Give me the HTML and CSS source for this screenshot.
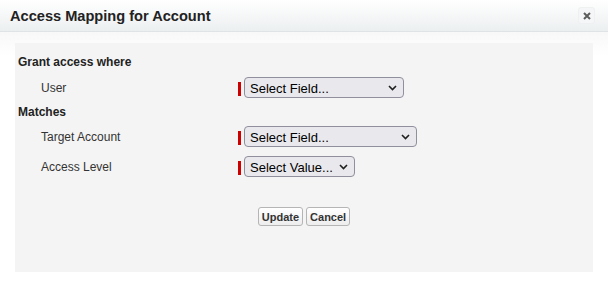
FILE: index.html
```html
<!DOCTYPE html>
<html lang="en">
<head>
    <meta charset="UTF-8">
    <meta name="viewport" content="width=device-width, initial-scale=1.0">
    <title>Access Mapping for Account</title>
    <link rel="stylesheet" href="styles.css">
</head>
<body>
    <div class="dialog">
        <!-- Header -->
        <div class="dialog-header">
            <h2 class="dialog-title">Access Mapping for Account</h2>
            <div class="close-btn">
                <svg width="8" height="8" viewBox="0 0 8 8">
                    <path d="M1 1 L7 7 M7 1 L1 7" stroke="#5c5c5c" stroke-width="2" fill="none"/>
                </svg>
            </div>
        </div>

        <!-- Body -->
        <div class="dialog-body">
            <div class="panel">
                <div class="section-title">Grant access where</div>
                <div class="form-row row-user">
                    <div class="form-label">User</div>
                    <div class="required-bar"></div>
                    <div class="select select-field">
                        <span>Select Field...</span>
                        <svg class="chevron" width="9" height="6" viewBox="0 0 9 6"><path d="M1 1 L4.5 4.5 L8 1" stroke="#1f1f1f" stroke-width="1.6" fill="none"/></svg>
                    </div>
                </div>

                <div class="section-title section-matches">Matches</div>
                <div class="form-row row-target">
                    <div class="form-label">Target Account</div>
                    <div class="required-bar"></div>
                    <div class="select select-target">
                        <span>Select Field...</span>
                        <svg class="chevron" width="9" height="6" viewBox="0 0 9 6"><path d="M1 1 L4.5 4.5 L8 1" stroke="#1f1f1f" stroke-width="1.6" fill="none"/></svg>
                    </div>
                </div>
                <div class="form-row row-level">
                    <div class="form-label">Access Level</div>
                    <div class="required-bar"></div>
                    <div class="select select-value">
                        <span>Select Value...</span>
                        <svg class="chevron" width="9" height="6" viewBox="0 0 9 6"><path d="M1 1 L4.5 4.5 L8 1" stroke="#1f1f1f" stroke-width="1.6" fill="none"/></svg>
                    </div>
                </div>

                <div class="buttons">
                    <button class="btn">Update</button>
                    <button class="btn">Cancel</button>
                </div>
            </div>
        </div>
    </div>
</body>
</html>
```

FILE: styles.css
```css
body {
    font-family: "Liberation Sans", Arial, sans-serif;
    background: #fff;
    margin: 0;
}
.dialog {
    width: 608px;
    height: 290px;
    background: #fff;
}

/* Header */
.dialog-header {
    height: 31px;
    display: flex;
    align-items: center;
    justify-content: space-between;
    padding: 0 13px 0 10px;
    background: linear-gradient(#ffffff, #eceff0);
    border-bottom: 1px solid #dfe3e5;
    box-sizing: content-box;
}
.dialog-title {
    margin: 0;
    font-size: 14.6px;
    font-weight: bold;
    color: #222;
}
.close-btn {
    width: 17px;
    height: 17px;
    display: flex;
    align-items: center;
    justify-content: center;
    background: #f4f6f7;
    border: 1px solid #eef0f1;
    border-radius: 3px;
    box-sizing: border-box;
}

/* Body */
.dialog-body {
    padding: 11px 15px 0;
    background: linear-gradient(#f8f8f8, #fff 24px);
}
.panel {
    height: 229px;
    background: #f4f4f4;
    padding: 11px 3px 0;
    box-sizing: border-box;
}
.section-title {
    height: 14px;
    padding-top: 1px;
    line-height: 14px;
    font-size: 12px;
    font-weight: bold;
    color: #222;
    box-sizing: border-box;
}
.section-matches { margin-top: 6px; }

.form-row {
    display: flex;
    align-items: flex-start;
    height: 21px;
}
.row-user { margin-top: 9px; }
.row-target { margin-top: 8px; }
.row-level { margin-top: 9px; }

.form-label {
    width: 197px;
    padding-left: 23px;
    padding-top: 1px;
    line-height: 21px;
    font-size: 12px;
    color: #333;
}
.required-bar {
    width: 3px;
    height: 14px;
    margin-top: 5px;
    margin-right: 3px;
    background: #c00;
}
.select {
    height: 21px;
    box-sizing: border-box;
    display: flex;
    align-items: center;
    justify-content: space-between;
    padding: 1px 6px 0 5px;
    background: #e9e9ed;
    border: 1px solid #8f8f9d;
    border-radius: 4px;
    font-size: 13px;
    color: #000;
}
.select-field { width: 160px; }
.select-target { width: 173px; }
.select-value { width: 111px; }
.chevron { margin-top: 0; }

.buttons {
    display: flex;
    justify-content: center;
    gap: 3px;
    margin-top: 30px;
}
.btn {
    height: 19px;
    padding: 0 3px;
    font-family: "Liberation Sans", Arial, sans-serif;
    font-size: 11px;
    font-weight: bold;
    color: #333;
    background: linear-gradient(#ffffff, #ededed);
    border: 1px solid #b5b5b5;
    border-radius: 3px;
}
```
